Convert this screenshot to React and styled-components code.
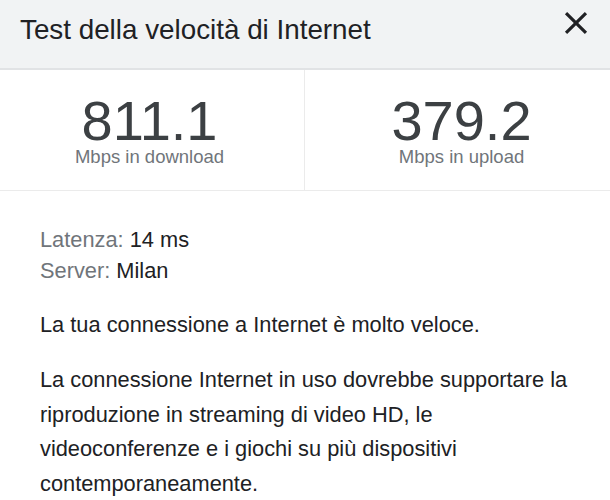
import React from "react";
import styled, { createGlobalStyle } from "styled-components";

const Global = createGlobalStyle`
  html, body { margin: 0; padding: 0; background: #fff; }
  body { font-family: "Liberation Sans", Arial, sans-serif; }
`;

const Card = styled.div`
  width: 610px;
  height: 500px;
  overflow: hidden;
  background: #fff;
`;

const Header = styled.header`
  height: 68px;
  box-sizing: content-box;
  background: #f1f3f4;
  border-bottom: 2px solid #e1e3e5;
  display: flex;
  justify-content: space-between;
  align-items: flex-start;
  padding: 0 15px 0 20px;
`;

const Title = styled.h1`
  margin: 14px 0 0;
  font-size: 27.8px;
  line-height: 32px;
  font-weight: 400;
  color: #202124;
`;

const CloseButton = styled.button`
  margin-top: 4px;
  width: 38px;
  height: 38px;
  padding: 0;
  border: 0;
  background: transparent;
  color: #202124;
  display: flex;
  svg { display: block; }
`;

const Stats = styled.div`
  display: grid;
  grid-template-columns: 305px 1fr;
  border-bottom: 1px solid #ebebeb;
`;

const Stat = styled.div`
  text-align: center;
  padding: 23px ${p => p.$padRight || 0}px 25px ${p => p.$padLeft || 0}px;
  border-right: ${p => (p.$divider ? "1px solid #ebebeb" : "0")};
`;

const Value = styled.div`
  font-size: 56px;
  line-height: 56px;
  color: #3c4043;
`;

const Unit = styled.div`
  font-size: 18.5px;
  line-height: 16px;
  color: #70757a;
`;

const Body = styled.div`
  padding: 33px 35px 0 40px;
  font-size: 21.8px;
  color: #202124;
`;

const Meta = styled.div`
  line-height: 31px;
`;

const MetaLabel = styled.span`
  color: #70757a;
`;

const Para = styled.p`
  margin: 23px 0 0;
  line-height: ${p => p.$lh || 31}px;
`;

function CloseIcon() {
  return (
    <svg width="38" height="38" viewBox="0 0 24 24" fill="currentColor">
      <path d="M19 6.41L17.59 5 12 10.59 6.41 5 5 6.41 10.59 12 5 17.59 6.41 19 12 13.41 17.59 19 19 17.59 13.41 12z" />
    </svg>
  );
}

export default function App() {
  return (
    <>
      <Global />
      <Card>
        <Header>
          <Title>Test della velocità di Internet</Title>
          <CloseButton aria-label="Chiudi">
            <CloseIcon />
          </CloseButton>
        </Header>
        <Stats>
          <Stat $divider $padRight={5}>
            <Value>811.1</Value>
            <Unit>Mbps in download</Unit>
          </Stat>
          <Stat $padLeft={8}>
            <Value>379.2</Value>
            <Unit>Mbps in upload</Unit>
          </Stat>
        </Stats>
        <Body>
          <Meta>
            <MetaLabel>Latenza:</MetaLabel> 14 ms
          </Meta>
          <Meta>
            <MetaLabel>Server:</MetaLabel> Milan
          </Meta>
          <Para>La tua connessione a Internet è molto veloce.</Para>
          <Para $lh={34.5}>
            La connessione Internet in uso dovrebbe supportare la riproduzione in
            streaming di video HD, le videoconferenze e i giochi su più dispositivi
            contemporaneamente.
          </Para>
        </Body>
      </Card>
    </>
  );
}
